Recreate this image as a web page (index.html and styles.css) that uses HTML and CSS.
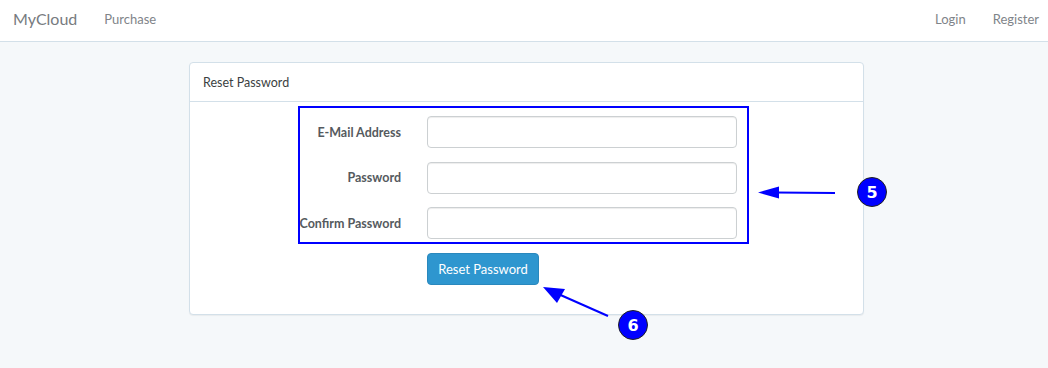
FILE: index.html
```html
<!DOCTYPE html>
<html lang="en">
<head>
  <meta charset="UTF-8" />
  <title>MyCloud - Reset Password</title>
  <link rel="stylesheet" href="styles.css">
</head>
<body>
  <nav class="navbar">
    <div class="nav-left">
      <a class="brand" href="#">MyCloud</a>
      <a class="nav-link" href="#">Purchase</a>
    </div>
    <div class="nav-right">
      <a class="nav-link" href="#">Login</a>
      <a class="nav-link" href="#">Register</a>
    </div>
  </nav>

  <div class="container">
    <div class="panel">
      <div class="panel-heading">Reset Password</div>
      <div class="panel-body">
        <form class="form">
          <div class="form-row">
            <label for="email">E-Mail Address</label>
            <input type="email" id="email" />
          </div>
          <div class="form-row">
            <label for="password">Password</label>
            <input type="password" id="password" />
          </div>
          <div class="form-row">
            <label for="confirm">Confirm Password</label>
            <input type="password" id="confirm" />
          </div>
          <div class="form-row">
            <span></span>
            <button type="button" class="btn">Reset Password</button>
          </div>
        </form>
      </div>
    </div>
  </div>

  <!-- annotation overlay -->
  <svg class="annotations" width="1048" height="368" viewBox="0 0 1048 368">
    <rect x="299" y="107" width="449" height="136" fill="none" stroke="#0000ff" stroke-width="2" />
    <line x1="835" y1="193" x2="775" y2="192.5" stroke="#0000ff" stroke-width="2" />
    <polygon points="758,192.5 779,186.5 779,198.5" fill="#0000ff" />
    <circle cx="872" cy="192" r="14.5" fill="#0000ff" stroke="#222" stroke-width="1" />
    <text x="872" y="198" class="badge-num">5</text>
    <line x1="608" y1="316" x2="556" y2="293" stroke="#0000ff" stroke-width="2" />
    <polygon points="543,287 565,289 557,303" fill="#0000ff" />
    <circle cx="633" cy="325" r="14.5" fill="#0000ff" stroke="#222" stroke-width="1" />
    <text x="633" y="331" class="badge-num">6</text>
  </svg>
</body>
</html>
```

FILE: styles.css
```css
* {
  box-sizing: border-box;
}

body {
  margin: 0;
  background-color: #f5f8fa;
  color: #636b6f;
  font-family: 'Lato', 'Open Sans', sans-serif;
  font-size: 12px;
  position: relative;
  min-height: 368px;
}

a {
  text-decoration: none;
}

.navbar {
  height: 42px;
  background-color: #fff;
  border-bottom: 1px solid #d3e0e9;
  display: flex;
  justify-content: space-between;
  align-items: center;
  padding: 0 9px 4px 13px;
}

.nav-left,
.nav-right {
  display: flex;
  align-items: center;
}

.brand {
  color: #777b80;
  font-size: 16px;
  margin-right: 27px;
}

.nav-link {
  color: #7f8489;
  font-size: 13px;
}

.nav-right .nav-link {
  margin-left: 27px;
}

.container {
  width: 675px;
  margin: 20px 0 0 189px;
}

.panel {
  background-color: #fff;
  border: 1px solid #d3e0e9;
  border-radius: 4px;
  box-shadow: 0 1px 1px rgba(0, 0, 0, 0.05);
}

.panel-heading {
  height: 39px;
  padding: 0 13px;
  display: flex;
  align-items: center;
  border-bottom: 1px solid #d3e0e9;
  color: #3b3f42;
  font-size: 12.5px;
}

.panel-body {
  padding: 14px 0 29px;
}

.form {
  display: flex;
  flex-direction: column;
  gap: 13.5px;
}

.form-row {
  display: grid;
  grid-template-columns: 211px 310px;
  column-gap: 26px;
  align-items: center;
}

.form-row label {
  text-align: right;
  font-weight: 700;
  color: #555a5e;
  font-size: 12.5px;
}

.form-row input {
  height: 32px;
  border: 1px solid #ccd0d2;
  border-radius: 4px;
  box-shadow: inset 0 1px 1px rgba(0, 0, 0, 0.075);
  outline: none;
}

.btn {
  width: 112px;
  height: 32px;
  border: 1px solid #2a88bd;
  border-radius: 4px;
  background-color: #2e96cf;
  color: #fff;
  font-family: inherit;
  font-size: 13px;
  cursor: pointer;
}

.annotations {
  position: absolute;
  top: 0;
  left: 0;
  pointer-events: none;
}

.badge-num {
  fill: #fff;
  font-family: 'DejaVu Sans', sans-serif;
  font-weight: 700;
  font-size: 16px;
  text-anchor: middle;
}
```
